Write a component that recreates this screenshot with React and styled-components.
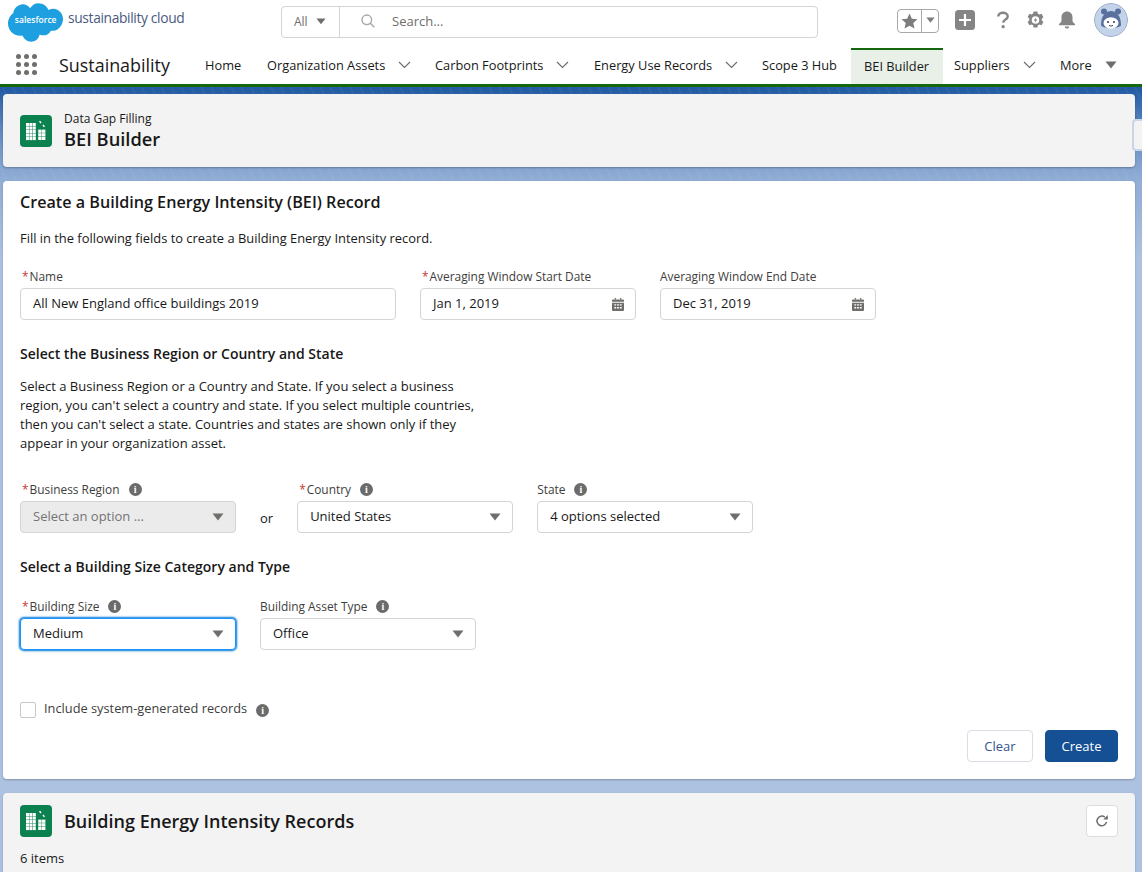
import styled, { createGlobalStyle } from "styled-components";

const GlobalStyle = createGlobalStyle`
  html, body {
    margin: 0;
    padding: 0;
    height: 872px;
    overflow: hidden;
    font-family: "Open Sans", "Noto Sans", sans-serif;
    font-size: 13px;
    color: #181818;
  }
  * { box-sizing: border-box; }
`;

const Page = styled.div`
  height: 872px;
  overflow: hidden;
  background:
    repeating-linear-gradient(65deg, rgba(255, 255, 255, 0.035) 0 2px, transparent 2px 9px) 0 0 / 100% 190px no-repeat,
    linear-gradient(180deg, #245ca4 90px, #5f88c0 130px, #8facd4 178px, #adc2e0 260px);
`;

const GlobalHeader = styled.header`
  height: 48px;
  background: #fff;
  display: flex;
  align-items: flex-start;
  position: relative;
`;

const LogoWrap = styled.div`
  width: 281px;
  padding: 2px 0 0 7px;
  display: flex;
  align-items: flex-start;
  gap: 5px;
`;

const LogoText = styled.span`
  font-size: 13.8px;
  line-height: 18px;
  letter-spacing: -0.35px;
  color: #4a5a80;
  margin-top: 7px;
`;

const SearchBox = styled.div`
  width: 537px;
  height: 32px;
  margin-top: 6px;
  border: 1px solid #d4d4d4;
  border-radius: 4px;
  display: flex;
  align-items: center;
`;

const ScopeSelect = styled.div`
  width: 58px;
  height: 100%;
  border-right: 1px solid #d4d4d4;
  display: flex;
  align-items: center;
  gap: 8px;
  padding: 0 0 2px 12px;
  color: #706e6b;
  font-size: 12px;
`;

const SearchField = styled.div`
  flex: 1;
  display: flex;
  align-items: center;
  gap: 17px;
  padding: 0 0 2px 21px;
  color: #706e6b;
  font-size: 13px;
`;

const HeaderTools = styled.div`
  margin-left: 79px;
  padding-top: 3px;
  display: flex;
  align-items: center;
  height: 37px;
`;

const FavGroup = styled.div`
  width: 42px;
  height: 24px;
  margin-top: 1px;
  border: 1px solid #a8a8a8;
  border-radius: 4px;
  display: flex;
  margin-right: 16px;
`;

const FavStar = styled.div`
  width: 24px;
  border-right: 1px solid #a8a8a8;
  display: flex;
  align-items: center;
  justify-content: center;
`;

const FavMore = styled.div`
  flex: 1;
  display: flex;
  align-items: center;
  justify-content: center;
`;

const ToolIcon = styled.div`
  width: ${(p) => p.$w || 20}px;
  margin-right: ${(p) => p.$gap || 12}px;
  display: flex;
  justify-content: center;
`;

const Avatar = styled.div`
  width: 34px;
  height: 34px;
  border-radius: 50%;
  margin-left: 4px;
  overflow: hidden;
`;

const NavBar = styled.nav`
  height: 39px;
  background: #fff;
  border-bottom: 3px solid #14660f;
  display: flex;
  align-items: stretch;
`;

const AppLauncher = styled.div`
  width: 59px;
  padding-left: 16px;
  display: flex;
  align-items: center;
  padding-bottom: 3px;
`;

const DotGrid = styled.div`
  display: grid;
  grid-template-columns: repeat(3, 5px);
  gap: 3px;
`;

const Dot = styled.span`
  width: 5px;
  height: 5px;
  border-radius: 50%;
  background: #706e6b;
`;

const AppName = styled.div`
  width: 146px;
  font-size: 17.9px;
  line-height: 34px;
  color: #181818;
`;

const NavItem = styled.div`
  display: flex;
  align-items: center;
  gap: ${(p) => p.$gap || 13}px;
  width: ${(p) => p.$w}px;
  height: ${(p) => (p.$active ? "37px" : "34px")};
  padding-left: ${(p) => p.$pad ?? 0}px;
  font-size: 12.8px;
  white-space: nowrap;
  color: #181818;
  ${(p) =>
    p.$active &&
    `
    margin-top: -1px;
    background: #e8f0e8;
    border-top: 3px solid #14660f;
    padding-bottom: 2px;
  `}
`;

const Content = styled.main`
  padding: 7px 7px 0 3px;
  display: flex;
  flex-direction: column;
  gap: 14px;
`;

const Card = styled.section`
  background: ${(p) => (p.$grey ? "#f3f3f3" : "#fff")};
  border-radius: 4px;
  box-shadow: 0 1px 2px rgba(0, 0, 0, 0.25);
  position: relative;
`;

const PageHeader = styled(Card)`
  height: 73px;
  display: flex;
  align-items: center;
  gap: 12px;
  padding: 0 17px 0 17px;
`;

const ObjectIcon = styled.div`
  width: 32px;
  height: 32px;
  border-radius: 4px;
  background: #0b8150;
  display: flex;
  align-items: center;
  justify-content: center;
  flex: none;
`;

const Eyebrow = styled.div`
  font-size: 12px;
  line-height: 16px;
`;

const PageTitle = styled.h1`
  margin: 0;
  font-size: 18.3px;
  line-height: 23px;
  font-weight: 600;
`;

const SideHandle = styled.div`
  position: absolute;
  right: -7px;
  top: 25px;
  width: 10px;
  height: 32px;
  background: #f3f3f3;
  border: 2px solid #c9d6e6;
  border-right: none;
  border-radius: 4px 0 0 4px;
`;

const FormCard = styled(Card)`
  height: 598px;
  padding: 10px 17px 0;
  display: flex;
  flex-direction: column;
`;

const FormTitle = styled.h2`
  margin: 0 0 15px;
  font-size: 16.15px;
  line-height: 23px;
  font-weight: 600;
`;

const Intro = styled.p`
  margin: 0 0 22px;
  font-size: 12.9px;
  line-height: 18px;
`;

const FieldRow = styled.div`
  display: flex;
  align-items: flex-end;
  gap: 24px;
`;

const Field = styled.div`
  width: ${(p) => p.$w || 216}px;
  display: flex;
  flex-direction: column;
`;

const Label = styled.label`
  height: 19px;
  font-size: 11.9px;
  line-height: 15px;
  color: #3e3e3c;
  display: flex;
  align-items: flex-start;
`;

const Req = styled.span`
  color: #c23934;
  margin: 0 1px 0 2px;
`;

const InfoDot = styled.span`
  width: 13px;
  height: 13px;
  margin-left: 9px;
  margin-top: 1px;
  border-radius: 50%;
  background: #6b6b6b;
  color: #fff;
  font-size: 10px;
  font-weight: 700;
  line-height: 13px;
  text-align: center;
  font-family: "Liberation Serif", serif;
`;

const Control = styled.div`
  height: 32px;
  border-radius: 4px;
  border: 1px solid ${(p) => (p.$focus ? "#1b96ff" : "#d4d4d4")};
  background: ${(p) => (p.$disabled ? "#ebebeb" : "#fff")};
  color: ${(p) => (p.$disabled ? "#747474" : "#181818")};
  box-shadow: ${(p) => (p.$focus ? "0 0 2px 1px #0176d3" : "none")};
  display: flex;
  align-items: center;
  justify-content: space-between;
  padding: 0 11px 0 12px;
  font-size: 13px;
  line-height: 26px;
`;

const ControlText = styled.span`
  margin-top: -2px;
`;

const SectionTitle = styled.h3`
  margin: ${(p) => p.$top}px 0 ${(p) => p.$bottom}px;
  font-size: 14px;
  line-height: 18px;
  font-weight: 600;
`;

const Para = styled.p`
  width: 460px;
  margin: 0 0 29px;
  font-size: 13px;
  line-height: 19px;
`;

const OrText = styled.div`
  height: 32px;
  font-size: 13px;
  line-height: 32px;
  padding-top: 1px;
`;

const CheckRow = styled.div`
  margin-top: 51px;
  display: flex;
  align-items: center;
  height: 18px;
`;

const CheckBox = styled.span`
  width: 16px;
  height: 16px;
  border: 1px solid #c9c9c9;
  border-radius: 2px;
  background: #fff;
  margin-right: 8px;
`;

const CheckLabel = styled.span`
  font-size: 12.8px;
  color: #3e3e3c;
  margin-top: -4px;
`;

const Actions = styled.div`
  margin-top: 11px;
  display: flex;
  justify-content: flex-end;
  gap: 12px;
`;

const Button = styled.button`
  height: 32px;
  width: ${(p) => p.$w}px;
  border-radius: 4px;
  font: inherit;
  font-size: 13px;
  border: 1px solid ${(p) => (p.$brand ? "#154f94" : "#d8dde6")};
  background: ${(p) => (p.$brand ? "#154f94" : "#fff")};
  color: ${(p) => (p.$brand ? "#fff" : "#33538a")};
  padding: 0;
`;

const RecordsCard = styled(Card)`
  height: 100px;
  padding: 12px 17px 0;
`;

const RecordsHead = styled.div`
  display: flex;
  align-items: center;
  gap: 12px;
  height: 32px;
`;

const RecordsTitle = styled.h2`
  margin: 0;
  flex: 1;
  font-size: 18px;
  font-weight: 600;
`;

const IconButton = styled.div`
  width: 32px;
  height: 32px;
  background: #fff;
  border: 1px solid #dddddd;
  border-radius: 4px;
  display: flex;
  align-items: center;
  justify-content: center;
`;

const Count = styled.div`
  margin-top: 12px;
  font-size: 13px;
  line-height: 18px;
`;

function Caret({ size = 12, color = "#706e6b" }) {
  return (
    <svg width={size} height={size * 0.67} viewBox="0 0 12 8">
      <path d="M0.5 0.5h11L6 7.5z" fill={color} />
    </svg>
  );
}

function Chevron() {
  return (
    <svg width="13" height="8" viewBox="0 0 13 8" fill="none">
      <path d="M1 1l5.5 5.5L12 1" stroke="#6b6b6b" strokeWidth="1.1" />
    </svg>
  );
}

function Calendar() {
  return (
    <svg width="12" height="13" viewBox="0 0 13 14">
      <path d="M3 0h1.4v1.6H3zM8.6 0H10v1.6H8.6z" fill="#706e6b" />
      <path d="M1 1.6h11a1 1 0 0 1 1 1V4H0V2.6a1 1 0 0 1 1-1z" fill="#706e6b" />
      <path
        fillRule="evenodd"
        d="M0 5h13v8a1 1 0 0 1-1 1H1a1 1 0 0 1-1-1zM2.5 6.6v1.6h2V6.6zM5.5 6.6v1.6h2V6.6zM8.5 6.6v1.6h2V6.6zM2.5 9.6v1.6h2V9.6zM5.5 9.6v1.6h2V9.6zM8.5 9.6v1.6h2V9.6z"
        fill="#706e6b"
      />
    </svg>
  );
}

const towerCols = [1, 4.4, 7.8];
const towerRows = [3, 6.5, 10, 13.5, 17];
const wingCols = [13.2, 17];
const wingRows = [9.6, 13.2, 16.8];

function BuildingIcon() {
  return (
    <svg width="22" height="22" viewBox="0 0 22 22" fill="#fff">
      {towerRows.map((y) =>
        towerCols.map((x) => <rect key={`${x}-${y}`} x={x} y={y} width="3" height="3.1" />)
      )}
      {wingRows.map((y) =>
        wingCols.map((x) => <rect key={`${x}-${y}`} x={x} y={y} width="3.400" height="3.200" />)
      )}
      <path d="M14 1.500l1.200-.8 1.400 2-1.200.8zM17.400 5.200l1.200-.8 1.400 2-1.200.8z" />
    </svg>
  );
}

function Logo() {
  return (
    <svg width="56" height="40" viewBox="0 0 57 40">
      <path
        d="M23.500 6c2-3 5-5 8.500-5 4.500 0 8.400 2.800 10.300 6.800 1.600-.8 3.300-1.200 5-1.200C53 6.600 57 12 57 17s-4 12-10 12c-.8 0-1.600-.1-2.300-.2-1.600 3-4.400 4.800-7.700 4.800-1.300 0-2.600-.3-3.700-.9C31.900 37.800 28.500 40 24.700 40c-4 0-7.400-2.500-9-6.300-.7.200-1.500.2-2.200.2C6 33.900 1 28 1 21.500c0-4.400 2.200-8.400 5.400-10.500C7 5 13 1.100 18 2.200c2 .4 4 1.800 5.500 3.800z"
        fill="#1e9fe0"
      />
      <text x="8" y="21" fontSize="8.700" fontWeight="600" fill="#fff" fontFamily="Open Sans, sans-serif">
        salesforce
      </text>
    </svg>
  );
}

function RobotAvatar() {
  return (
    <svg width="34" height="34" viewBox="0 0 34 34">
      <circle cx="17" cy="17" r="16.500" fill="#c3d3ea" stroke="#9aa9c4" />
      <circle cx="10" cy="8.500" r="3" fill="#5a709f" />
      <circle cx="24" cy="8.500" r="3" fill="#5a709f" />
      <path d="M7 22c0-9 4.500-14 10-14s10 5 10 14c0 4-20 4-20 0z" fill="#5a709f" />
      <ellipse cx="17" cy="20" rx="7.500" ry="5.800" fill="#fff" />
      <circle cx="14" cy="19" r="1.100" fill="#34466e" />
      <circle cx="20" cy="19" r="1.100" fill="#34466e" />
      <path d="M15 22.300c1.300 1 2.700 1 4 0" stroke="#34466e" fill="none" />
    </svg>
  );
}

const navItems = [
  { label: "Home", w: 62 },
  { label: "Organization Assets", w: 168, chevron: true },
  { label: "Carbon Footprints", w: 159, chevron: true },
  { label: "Energy Use Records", w: 168, chevron: true },
  { label: "Scope 3 Hub", w: 89 },
];

function SelectField({ label, required, info = true, value, w, disabled, focus }) {
  return (
    <Field $w={w}>
      <Label>
        {required && <Req>*</Req>}
        {label}
        {info && <InfoDot>i</InfoDot>}
      </Label>
      <Control $disabled={disabled} $focus={focus}>
        <ControlText>{value}</ControlText>
        <Caret />
      </Control>
    </Field>
  );
}

function DateField({ label, required, value }) {
  return (
    <Field>
      <Label>
        {required && <Req>*</Req>}
        {label}
      </Label>
      <Control>
        <ControlText>{value}</ControlText>
        <Calendar />
      </Control>
    </Field>
  );
}

export default function App() {
  return (
    <Page>
      <GlobalStyle />
      <GlobalHeader>
        <LogoWrap>
          <Logo />
          <LogoText>sustainability cloud</LogoText>
        </LogoWrap>
        <SearchBox>
          <ScopeSelect>
            All
            <Caret size={10} />
          </ScopeSelect>
          <SearchField>
            <svg width="14" height="14" viewBox="0 0 14 14" fill="none" stroke="#a8a8a8" strokeWidth="1.400">
              <circle cx="5.800" cy="5.800" r="4.800" />
              <path d="M9.300 9.300L13.300 13.300" />
            </svg>
            Search...
          </SearchField>
        </SearchBox>
        <HeaderTools>
          <FavGroup>
            <FavStar>
              <svg width="17" height="16" viewBox="0 0 18 17">
                <path d="M9 0.500l2.500 5.500 6 .600-4.500 4 1.300 6L9 13.500l-5.300 3.100 1.300-6-4.500-4 6-.600z" fill="#7d7d7d" />
              </svg>
            </FavStar>
            <FavMore>
              <Caret size={9} color="#7d7d7d" />
            </FavMore>
          </FavGroup>
          <ToolIcon $gap={22}>
            <svg width="20" height="20" viewBox="0 0 20 20">
              <rect width="20" height="20" rx="3.500" fill="#858585" />
              <path d="M8.900 4h2.200v4.900H16v2.200h-4.900V16H8.900v-4.900H4V8.900h4.900z" fill="#fff" />
            </svg>
          </ToolIcon>
          <ToolIcon $w={12} $gap={18}>
            <svg width="12" height="18" viewBox="0 0 14 20" fill="none">
              <path d="M1.500 5.800C1.500 3 4 1.500 7 1.500s5.500 1.700 5.500 4.300c0 3.900-5.200 3.400-5.200 7.400" stroke="#858585" strokeWidth="2.800" />
              <circle cx="7.200" cy="17.800" r="1.900" fill="#858585" />
            </svg>
          </ToolIcon>
          <ToolIcon $w={17} $gap={14}>
            <svg width="17" height="18" viewBox="0 0 18 19">
              <path
                fillRule="evenodd"
                d="M7 .500h4l.500 2.400 1.600.900 2.300-.800 2 3.500-1.800 1.600v1.800l1.800 1.600-2 3.500-2.300-.800-1.600.900-.500 2.400H7l-.500-2.400-1.600-.900-2.300.800-2-3.500 1.800-1.600V7.900L.6 6.300l2-3.500 2.300.800 1.600-.900zM9 5.500a4 4 0 1 0 0 8 4 4 0 0 0 0-8z"
                fill="#858585"
              />
              <path d="M9.800 6.500L7 10h1.800l-.6 2.600L11 9H9.200z" fill="#858585" />
            </svg>
          </ToolIcon>
          <ToolIcon $w={18} $gap={14}>
            <svg width="18" height="18" viewBox="0 0 18 18">
              <path d="M9 0.500c3.300 0 5.500 2.500 5.500 5.800v3.200c0 1.500 1 2.200 2.300 3.300.600.500.400 1.500-.500 1.500H1.700c-.900 0-1.100-1-.500-1.500C2.500 11.700 3.500 11 3.500 9.500V6.300C3.500 3 5.700.500 9 .500z" fill="#858585" />
              <path d="M6.800 15.400h4.400c0 1.300-1 2.100-2.200 2.100s-2.200-.800-2.200-2.100z" fill="#858585" />
            </svg>
          </ToolIcon>
          <Avatar>
            <RobotAvatar />
          </Avatar>
        </HeaderTools>
      </GlobalHeader>

      <NavBar>
        <AppLauncher>
          <DotGrid>
            {Array.from({ length: 9 }).map((_, i) => (
              <Dot key={i} />
            ))}
          </DotGrid>
        </AppLauncher>
        <AppName>Sustainability</AppName>
        {navItems.map((item) => (
          <NavItem key={item.label} $w={item.w}>
            {item.label}
            {item.chevron && <Chevron />}
          </NavItem>
        ))}
        <NavItem $w={92} $pad={13} $active>
          BEI Builder
        </NavItem>
        <NavItem $w={117} $pad={11}>
          Suppliers
          <Chevron />
        </NavItem>
        <NavItem $gap={13}>
          More
          <Caret />
        </NavItem>
      </NavBar>

      <Content>
        <PageHeader $grey>
          <ObjectIcon>
            <BuildingIcon />
          </ObjectIcon>
          <div>
            <Eyebrow>Data Gap Filling</Eyebrow>
            <PageTitle>BEI Builder</PageTitle>
          </div>
          <SideHandle />
        </PageHeader>

        <FormCard>
          <FormTitle>Create a Building Energy Intensity (BEI) Record</FormTitle>
          <Intro>Fill in the following fields to create a Building Energy Intensity record.</Intro>
          <FieldRow>
            <Field $w={376}>
              <Label>
                <Req>*</Req>Name
              </Label>
              <Control>
                <ControlText>All New England office buildings 2019</ControlText>
              </Control>
            </Field>
            <DateField label="Averaging Window Start Date" required value="Jan 1, 2019" />
            <DateField label="Averaging Window End Date" value="Dec 31, 2019" />
          </FieldRow>

          <SectionTitle $top={25} $bottom={14}>
            Select the Business Region or Country and State
          </SectionTitle>
          <Para>
            Select a Business Region or a Country and State. If you select a business region, you can't select a
            country and state. If you select multiple countries, then you can't select a state. Countries and
            states are shown only if they appear in your organization asset.
          </Para>
          <FieldRow>
            <SelectField label="Business Region" required value="Select an option ..." disabled />
            <OrText>or</OrText>
            <SelectField label="Country" required value="United States" />
            <SelectField label="State" value="4 options selected" />
          </FieldRow>

          <SectionTitle $top={25} $bottom={23}>
            Select a Building Size Category and Type
          </SectionTitle>
          <FieldRow>
            <SelectField label="Building Size" required value="Medium" focus />
            <SelectField label="Building Asset Type" value="Office" />
          </FieldRow>

          <CheckRow>
            <CheckBox />
            <CheckLabel>Include system-generated records</CheckLabel>
            <InfoDot>i</InfoDot>
          </CheckRow>

          <Actions>
            <Button $w={66}>Clear</Button>
            <Button $w={73} $brand>
              Create
            </Button>
          </Actions>
        </FormCard>

        <RecordsCard $grey>
          <RecordsHead>
            <ObjectIcon>
              <BuildingIcon />
            </ObjectIcon>
            <RecordsTitle>Building Energy Intensity Records</RecordsTitle>
            <IconButton>
              <svg width="14" height="14" viewBox="0 0 14 14" fill="none">
                <path d="M11.500 7.800A4.800 4.800 0 1 1 9.800 3.200" stroke="#706e6b" strokeWidth="1.500" />
                <path d="M12.800 1v4.600H8.200z" fill="#706e6b" />
              </svg>
            </IconButton>
          </RecordsHead>
          <Count>6 items</Count>
        </RecordsCard>
      </Content>
    </Page>
  );
}
